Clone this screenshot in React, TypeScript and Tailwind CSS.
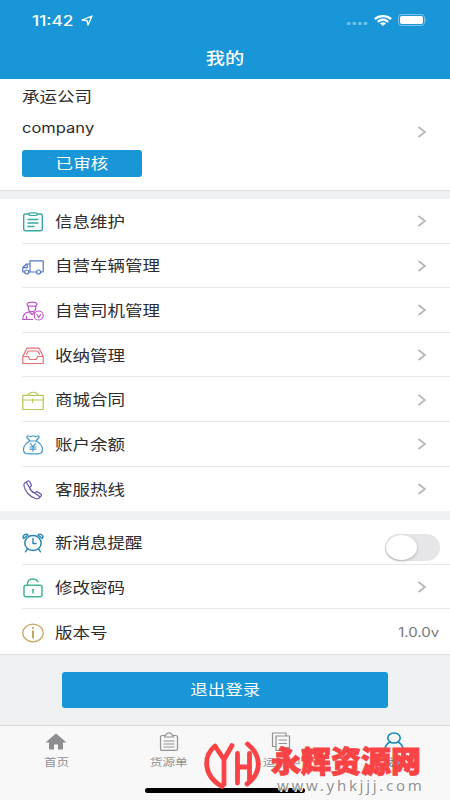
import type { ReactNode } from "react";

interface MenuItem {
  label: string;
  icon: ReactNode;
  trailing?: ReactNode;
}

interface IconProps {
  color: string;
  children: ReactNode;
}

function LineIcon({ color, children }: IconProps) {
  return (
    <svg
      width="22"
      height="20"
      viewBox="0 0 22 20"
      fill="none"
      stroke={color}
      strokeWidth="1.2"
      strokeLinecap="round"
      strokeLinejoin="round"
      className="shrink-0"
    >
      {children}
    </svg>
  );
}

const Chevron = () => (
  <svg width="10" height="12" viewBox="0 0 10 12" fill="none" stroke="#b4b4b6" strokeWidth="1.6" className="mr-[23px]">
    <path d="M1.5 1 8 6l-6.5 5" />
  </svg>
);

const Toggle = () => (
  <span className="mr-[10px] mt-[10px] flex h-[27px] w-[55px] rounded-full bg-[#e6e6e9] p-px">
    <span className="h-[25px] w-[31px] rounded-[50%] bg-white shadow-[0_1px_3px_rgba(0,0,0,0.25)]" />
  </span>
);

const mainItems: MenuItem[] = [
  {
    label: "信息维护",
    icon: (
      <LineIcon color="#35aba3">
        <path
          strokeWidth="1.4"
          d="M7 2H3.5C2.4 2 1.7 2.600 1.7 3.500v13.800c0 .9.700 1.500 1.800 1.500h15c1.100 0 1.800-.6 1.800-1.500V3.500c0-.9-.7-1.500-1.800-1.500H15"
        />
        <rect x="7" y=".8" width="8" height="2.700" rx="1" />
        <path d="M6 7.500h10M6 11h10M6 14.500h6" strokeWidth="1.400" />
      </LineIcon>
    ),
  },
  {
    label: "自营车辆管理",
    icon: (
      <LineIcon color="#5577c6">
        <path d="M6.800 15h7.500M18.800 15h2.400V3.800H8V15M8 7H4.500L.8 10.500V15h1.700M1 10.700h4.200V7" />
        <circle cx="4.700" cy="15" r="2" />
        <circle cx="16.600" cy="15" r="2" />
      </LineIcon>
    ),
  },
  {
    label: "自营司机管理",
    icon: (
      <LineIcon color="#bd55c4">
        <path d="M5 3C6 .6 14 .6 15 3L14 5.200H6ZM6.300 5.200v2c0 4.600 7.400 4.600 7.400 0v-2M7 10.800c-4 .6-6.200 2.500-6.200 7.700h10M4.500 15v3.500M8 11.500l2 2 2.300-2" />
        <circle cx="16.700" cy="14.500" r="4.500" />
        <path d="m14.800 13.500 2 3 1.800-3" />
      </LineIcon>
    ),
  },
  {
    label: "收纳管理",
    icon: (
      <LineIcon color="#e66f74">
        <path d="M.8 10.500 4.500 3c.3-.6.700-.8 1.200-.8h10.600c.5 0 .9.200 1.200.8l3.700 7.500v7H.8ZM.8 10.500h5.500l1.500 3h6.400l1.500-3h5.500M4.500 8.200 6.200 5h9.600l1.700 3.200" />
      </LineIcon>
    ),
  },
  {
    label: "商城合同",
    icon: (
      <LineIcon color="#b2c956">
        <path d="M.8 4.300h20.400v14.200H.8ZM.8 9h20.400M10.500 8v3.300M6 4.300C7 .2 15 .2 16 4.300" />
      </LineIcon>
    ),
  },
  {
    label: "账户余额",
    icon: (
      <LineIcon color="#469aca">
        <path d="M8 6 5 2.500c-.5-1 .5-1.700 1.500-1.500C8 1.500 8.500 2 9.500 1.200c1-.6 2-.6 3 0 1 .8 1.500.3 3-.2 1-.2 2 .500 1.500 1.500L14 6M7 6h8M8 6c-4 2-6.500 5-6.500 8.500 0 3 1.500 4.300 4.500 4.300h10c3 0 4.500-1.300 4.500-4.300C20.500 11 18 8 14 6" />
        <path d="m8.500 8.500 2.500 3.300 2.500-3.300M8 12h6M8 14.200h6M11 12v4.300" />
      </LineIcon>
    ),
  },
  {
    label: "客服热线",
    icon: (
      <LineIcon color="#6753ab">
        <path d="M3 2.800 6 1c.8-.4 1.500 0 1.800.7l1.500 3c.3.700.1 1.200-.4 1.600L7.500 7.500c.7 2.500 2.500 4.500 5 5.500l1.500-1c.6-.4 1.200-.4 1.800 0l3 2c.7.500.8 1.200.3 1.800l-2 2.200c-.8.800-2 .900-3.500.500C8 17 3 11.500 2 6c-.3-1.500 0-2.600 1-3.200ZM4.500 2.500l3 5M12.500 13l5 3.500" />
      </LineIcon>
    ),
  },
];

const settingItems: MenuItem[] = [
  {
    label: "新消息提醒",
    trailing: <Toggle />,
    icon: (
      <LineIcon color="#2685b5">
        <ellipse cx="11" cy="10" rx="8.200" ry="7.500" strokeWidth="1.500" />
        <path
          strokeWidth="1.400"
          d="M11 5.500V10.500h3M5.500 16 3.500 18.800M16.500 16l2 2.800M1.700 5.500C-.2 3 3.500-.3 6 2M20.300 5.500C22.200 3 18.500-.3 16 2M1.700 5.500 6 2M20.300 5.500 16 2"
        />
      </LineIcon>
    ),
  },
  {
    label: "修改密码",
    icon: (
      <LineIcon color="#43b88f">
        <rect x="2" y="7.200" width="18" height="11.600" rx="2" strokeWidth="1.500" />
        <path strokeWidth="1.500" d="M5.500 7C5 3 7.500 1 10.500 1c2.500 0 4.500 1 5.300 2.800M11 12v3M10.500 11.700h1" />
      </LineIcon>
    ),
  },
  {
    label: "版本号",
    trailing: (
      <span className="mr-[11px] mt-[2px] origin-right scale-x-[1.2] text-[12.500px] text-[#77777a]">1.0.0v</span>
    ),
    icon: (
      <LineIcon color="#c8a45c">
        <ellipse cx="11" cy="10" rx="10.200" ry="8.800" />
        <path d="M11 8.300v6.200M11 5v.3" strokeWidth="2" />
      </LineIcon>
    ),
  },
];

function MenuList({ items }: { items: MenuItem[] }) {
  return (
    <ul className="bg-white">
      {items.map((item, index) => (
        <li key={item.label} className="flex h-[44.600px] items-center pl-[22px]">
          <span className="mt-[2px] shrink-0">{item.icon}</span>
          <div
            className={
              index < items.length - 1
                ? "-ml-[22px] flex h-full flex-1 items-center border-b border-[#e9e9eb] pl-[33px]"
                : "-ml-[22px] flex h-full flex-1 items-center pl-[33px]"
            }
          >
            <span className="mt-[4px] origin-left scale-x-[1.2] whitespace-nowrap text-[14.600px] text-[#2c2c2e]">
              {item.label}
            </span>
            <span className="ml-auto mt-px flex">{item.trailing ?? <Chevron />}</span>
          </div>
        </li>
      ))}
    </ul>
  );
}

function StatusBar() {
  return (
    <div className="flex h-10 items-center pl-[32px] pr-[23px] text-white">
      <span className="w-[49px]">
        <span className="inline-block origin-left scale-x-[1.25] text-[13.800px] font-medium">11:42</span>
      </span>
      <svg width="12" height="11" viewBox="0 0 12 11" fill="none" stroke="white" strokeWidth="1.300" strokeLinejoin="round">
        <path d="M1 5 11 1 7 10 6 5.500Z" />
      </svg>
      <div className="ml-auto flex items-center">
        <svg width="21" height="3" viewBox="0 0 21 3" fill="#74c2e8" className="mr-[6px] mt-[7px]">
          <rect width="3.500" height="3" rx="1" />
          <rect x="5.600" width="3.500" height="3" rx="1" />
          <rect x="11.200" width="3.500" height="3" rx="1" />
          <rect x="16.800" width="3.500" height="3" rx="1" />
        </svg>
        <svg width="18" height="11" viewBox="0 0 18 11" fill="none" stroke="white" strokeWidth="2.200">
          <path d="M.8 4.200C5.500.2 12.500.2 17.200 4.200M3.800 6.800C7 4.200 11 4.200 14.200 6.800" />
          <path d="M5.900 8.300Q9 6.200 12.100 8.300L9 11Z" fill="white" stroke="none" />
        </svg>
        <svg width="29" height="12" viewBox="0 0 29 12" className="ml-[6px]">
          <rect x=".5" y=".5" width="26" height="11" rx="3" fill="none" stroke="#7cc5ea" />
          <rect x="2" y="2" width="23" height="8" rx="1.800" fill="white" />
          <path d="M27.500 4q1.500 2 0 4Z" fill="#7cc5ea" />
        </svg>
      </div>
    </div>
  );
}

const tabs = [
  {
    label: "首页",
    icon: (
      <svg width="22" height="20" viewBox="0 0 22 20" fill="#8e8e90">
        <path d="M11 1.500 21.500 10.500H18v7h-5v-5H9v5H4v-7H.5Z" />
      </svg>
    ),
  },
  {
    label: "货源单",
    icon: (
      <LineIcon color="#929294">
        <path d="M7 3.500H4.500c-1.200 0-2 .7-2 1.700v11.500c0 1 .8 1.700 2 1.700h13c1.200 0 2-.7 2-1.700V5.200c0-1-.8-1.700-2-1.700h-2.500M6.500 5C6.500 3 8 3.500 8.500 2c.5-1.500 4.500-1.500 5 0 .5 1.500 2 1 2 3ZM6 9h10M6 12h10M6 15h10" />
      </LineIcon>
    ),
  },
  {
    label: "运输中",
    icon: (
      <LineIcon color="#929294">
        <path d="M6 14.500H2.500V1H16v3M6 4h13.500v11.500L17 18.500H6ZM9 8h7.500M9 11.500h7.500M19.500 15.500H17v3" />
      </LineIcon>
    ),
  },
  {
    label: "我的",
    active: true,
    icon: (
      <LineIcon color="#1789bb">
        <ellipse cx="11" cy="6" rx="6.200" ry="5" strokeWidth="1.600" />
        <path d="M7 10C4 11.500 2 14 1.500 18.500M15 10c3 1.500 5 4 5.500 8.500" strokeWidth="1.600" />
      </LineIcon>
    ),
  },
];

function Watermark() {
  return (
    <div className="absolute left-[204px] top-[739px] flex">
      <svg
        width="57"
        height="52"
        viewBox="0 0 57 52"
        fill="none"
        stroke="#f94344"
        strokeWidth="4.800"
        strokeLinecap="round"
        strokeLinejoin="round"
      >
        <path d="M18 47.500C-1 37-1 17 11 7l9 13.500 8-14M20 20.500v25" />
        <path d="M33.500 14.500v29.500M33.500 28h12M45.500 14.500v27M43.500 5C57 16 59 33 43 45" />
      </svg>
      <div className="ml-[10px] pt-[2px]">
        <div className="whitespace-nowrap text-[30px] font-black leading-[40px] text-[#f94344] [-webkit-text-stroke:1px_#f94344]">
          永辉资源网
        </div>
        <div className="-mt-[3px] ml-[6px] whitespace-nowrap font-['Noto_Sans'] text-[15px] leading-[14px] tracking-[2.700px] text-[#929292] [text-shadow:1px_1px_0_white,-1px_-1px_0_white]">
          www.yhkjjj.com
        </div>
      </div>
    </div>
  );
}

export default function App() {
  return (
    <div className="relative flex h-[800px] w-[450px] flex-col overflow-hidden bg-[#eff1f3] font-['Inter','Noto_Sans_CJK_SC',sans-serif]">
      <header className="h-[78.500px] shrink-0 bg-[#1996d7]">
        <StatusBar />
        <h1 className="flex h-[36px] items-center justify-center text-white">
          <span className="scale-x-[1.2] text-[16px] font-medium">我的</span>
        </h1>
      </header>

      <section className="flex h-[112px] shrink-0 items-center border-b border-[#e2e3e5] bg-white pl-[22px]">
        <div className="flex h-full flex-col items-start text-[#2c2c2e]">
          <span className="mt-[8px] origin-left scale-x-[1.2] text-[14.600px] leading-[20px]">承运公司</span>
          <span className="mt-[11px] origin-left scale-x-[1.18] text-[14px] leading-[20px]">company</span>
          <span className="mt-[12px] flex h-[27px] w-[120px] items-center justify-center rounded-[3px] bg-[#1996d7] text-white">
            <span className="mt-[3px] scale-x-[1.2] text-[14.600px]">已审核</span>
          </span>
        </div>
        <span className="mb-[4px] ml-auto">
          <Chevron />
        </span>
      </section>

      <div className="mt-[8.500px]">
        <MenuList items={mainItems} />
      </div>
      <div className="mt-[9px]">
        <MenuList items={settingItems} />
      </div>

      <div className="flex flex-1 justify-center border-t border-[#e2e3e5] pt-[17px]">
        <button type="button" className="h-[36px] w-[326px] rounded-[3px] bg-[#1996d7] text-white">
          <span className="inline-block scale-x-[1.2] text-[14.600px]">退出登录</span>
        </button>
      </div>

      <nav className="flex h-[75px] shrink-0 flex-col items-center border-t border-[#d8d6d6] bg-[#f8f8f8]">
        <div className="flex w-full flex-1">
          {tabs.map((tab) => (
            <div key={tab.label} className="flex flex-1 flex-col items-center pt-[6px]">
              {tab.icon}
              <span
                className={
                  tab.active
                    ? "mt-[4px] scale-x-[1.2] text-[10.500px] leading-[14px] text-[#1789bb]"
                    : "mt-[4px] scale-x-[1.2] text-[10.500px] leading-[14px] text-[#929294]"
                }
              >
                {tab.label}
              </span>
            </div>
          ))}
        </div>
        <div className="mb-[7px] h-[5px] w-[160px] rounded-full bg-black" />
      </nav>

      <Watermark />
    </div>
  );
}
